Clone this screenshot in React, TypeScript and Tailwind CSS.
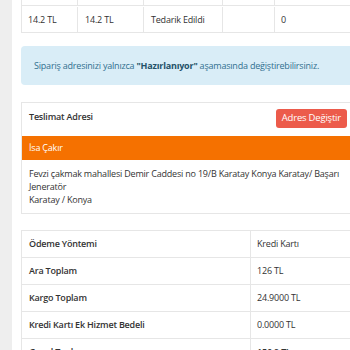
import React from 'react';

const font = { fontFamily: '"Open Sans", "Noto Sans", sans-serif' };

const summary = [
  { label: 'Ödeme Yöntemi', value: 'Kredi Kartı' },
  { label: 'Ara Toplam', value: '126 TL' },
  { label: 'Kargo Toplam', value: '24.9000 TL' },
  { label: 'Kredi Kartı Ek Hizmet Bedeli', value: '0.0000 TL' },
  { label: 'Genel Toplam', value: '150.9 TL', bold: true },
];

export default function App() {
  return (
    <div className="flex h-[350px] w-[350px] overflow-hidden bg-white text-[9px] tracking-[-0.2px] text-[#333]" style={font}>
      {/* sidebar edge */}
      <div className="w-[12px] shrink-0 bg-[#eeeeee]" />

      <div className="w-[345px] shrink-0 pl-[9px]">
        {/* order lines table */}
        <div className="border-x border-b border-[#e6e6e6]">
          <div className="flex h-[6px] border-b border-[#e6e6e6]">
            <div className="w-[56px] border-r border-[#e6e6e6]" />
            <div className="w-[66px] border-r border-[#e6e6e6]" />
            <div className="w-[79px] border-r border-[#e6e6e6]" />
            <div className="w-[52px] border-r border-[#e6e6e6]" />
            <div className="flex-1" />
          </div>
          <div className="flex h-[26px] items-center pt-[1px]">
            <div className="flex h-full w-[56px] items-center border-r border-[#e6e6e6] pl-[6px]">14.2 TL</div>
            <div className="flex h-full w-[66px] items-center border-r border-[#e6e6e6] pl-[7px]">14.2 TL</div>
            <div className="flex h-full w-[79px] items-center border-r border-[#e6e6e6] pl-[7px]">Tedarik Edildi</div>
            <div className="h-full w-[52px] border-r border-[#e6e6e6]" />
            <div className="flex h-full flex-1 items-center pl-[6px]">0</div>
          </div>
        </div>

        {/* info alert */}
        <div className="mt-[13px] -mr-[20px] flex h-[39px] items-center rounded-[4px] bg-[#d9edf7] pl-[13px] text-[#31708f]">
          <span className="whitespace-nowrap">
            Sipariş adresinizi yalnızca <b className="text-[#245269]">"Hazırlanıyor"</b> aşamasında değiştirebilirsiniz.
          </span>
        </div>

        {/* delivery address */}
        <div className="mt-[17px] border border-[#e6e6e6]">
          <div className="flex h-[33px] items-start justify-between pl-[7px] pr-[9px]">
            <span className="mt-[7px] font-semibold">Teslimat Adresi</span>
            <button className="mt-[6px] h-[19px] rounded-[3px] bg-[#ec5b4b] px-[6px] text-[9.5px] text-white">
              Adres Değiştir
            </button>
          </div>
          <div className="flex h-[24px] items-center bg-[#f57100] pl-[7px] text-white">İsa Çakır</div>
          <div className="px-[7px] pb-[7px] pt-[7px] leading-[13px]">
            <div className="whitespace-nowrap">Fevzi çakmak mahallesi Demir Caddesi no 19/B Karatay Konya Karatay/ Başarı</div>
            <div>Jeneratör</div>
            <div>Karatay / Konya</div>
          </div>
        </div>

        {/* totals */}
        <div className="mt-[16px] border-x border-t border-[#e6e6e6]">
          {summary.map((row) => (
            <div key={row.label} className="flex h-[27px] border-b border-[#e6e6e6]">
              <div className="flex w-[229px] items-center border-r border-[#e6e6e6] pl-[7px] font-semibold">
                {row.label}
              </div>
              <div className={`flex flex-1 items-center pl-[6px] ${row.bold ? 'font-semibold' : ''}`}>{row.value}</div>
            </div>
          ))}
        </div>
      </div>
    </div>
  );
}
